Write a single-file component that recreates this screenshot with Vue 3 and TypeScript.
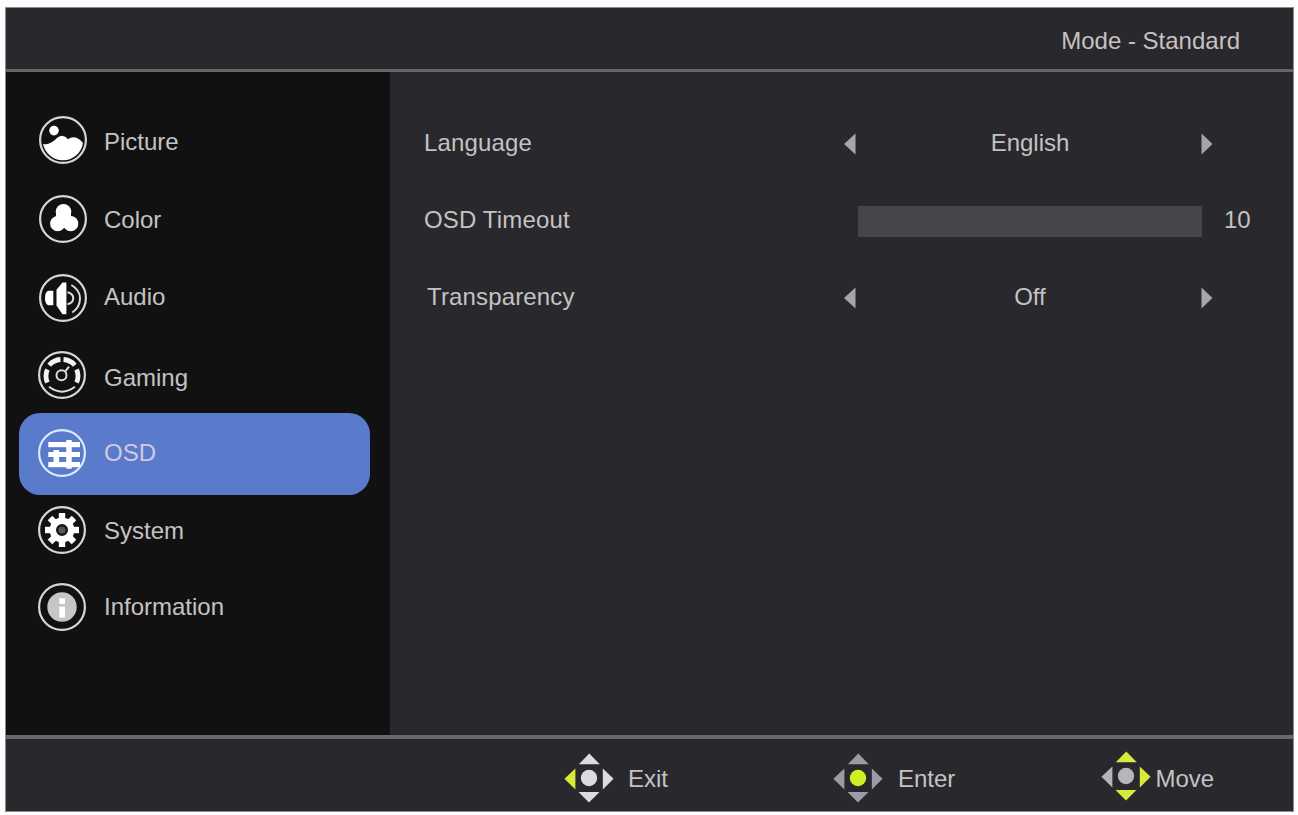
<script setup lang="ts">
type Icon = 'picture' | 'color' | 'audio' | 'gaming' | 'osd' | 'system' | 'information'

interface MenuItem {
  icon: Icon
  label: string
}

interface Hint {
  id: 'exit' | 'enter' | 'move'
  label: string
}

const menu: MenuItem[] = [
  { icon: 'picture', label: 'Picture' },
  { icon: 'color', label: 'Color' },
  { icon: 'audio', label: 'Audio' },
  { icon: 'gaming', label: 'Gaming' },
  { icon: 'osd', label: 'OSD' },
  { icon: 'system', label: 'System' },
  { icon: 'information', label: 'Information' },
]
const active: Icon = 'osd'

const hints: Hint[] = [
  { id: 'exit', label: 'Exit' },
  { id: 'enter', label: 'Enter' },
  { id: 'move', label: 'Move' },
]

const teeth: number[] = [0, 45, 90, 135, 180, 225, 270, 315]
</script>

<template>
  <div class="screen">
    <div class="panel">
      <header class="top">
        <span class="mode">Mode - Standard</span>
      </header>

      <div class="body">
        <nav class="menu">
          <div
            v-for="item in menu"
            :key="item.icon"
            class="item"
            :class="[item.icon, { active: item.icon === active }]"
          >
            <svg class="icon" viewBox="0 0 50 50" width="50" height="50">
              <circle class="ring" cx="25" cy="25" r="22.900" />
              <g v-if="item.icon === 'picture'" class="solid">
                <circle cx="16" cy="15.600" r="4.800" />
                <path d="M5 28.800 Q8 30 11 28.600 Q14 27 17 25 Q19.500 21.500 24 20.800 Q27.500 21 30 24.200 Q34 21 38.500 22.800 Q42 24 45 28 A20.300 20.300 0 0 1 5 28.800 Z" />
              </g>
              <g v-else-if="item.icon === 'color'" class="solid">
                <circle cx="25.500" cy="17.800" r="7.800" />
                <circle cx="19.700" cy="29.700" r="7.600" />
                <circle cx="32.700" cy="29.700" r="7.600" />
                <path d="M18 20 L33 20 L33 34 L18 34 Z" />
              </g>
              <g v-else-if="item.icon === 'audio'">
                <path class="solid" d="M15.300 17.700 H10.500 Q7 18.500 7 25 Q7 31.500 10.500 32.300 H15.300 Z" />
                <path class="solid" d="M18.500 16.700 L24.500 9.500 H28.400 V41.300 H24.500 L18.500 32.400 Z" />
                <path class="line" d="M29.500 19.300 Q35.200 20.500 35.200 25.300 Q35.200 30 29.500 31.300" />
                <path class="line" d="M33.300 12 Q42 17 42 25.300 Q42 34.500 34.300 39.500" />
              </g>
              <g v-else-if="item.icon === 'gaming'">
                <circle class="line" cx="24.500" cy="25.300" r="5" />
                <path class="line" d="M28.300 21.300 L32 16.700" />
                <path class="segment" d="M12.200 15.200 A16 16 0 0 1 23.500 9.500" />
                <path class="segment" d="M26.500 9.500 A16 16 0 0 1 37.800 15.200" />
                <path class="segment" d="M10.400 19.500 A16 16 0 0 0 10.400 32.500" />
                <path class="segment" d="M39.600 19.500 A16 16 0 0 1 39.600 32.500" />
                <path class="line" d="M12 36.800 Q25 46.500 38 36.800" />
              </g>
              <g v-else-if="item.icon === 'osd'" class="solid">
                <rect x="11.300" y="14" width="31.700" height="5.200" />
                <rect x="11.300" y="24" width="31.700" height="5" />
                <rect x="11.300" y="34" width="31.700" height="5.200" />
                <rect x="29.200" y="12" width="5.500" height="28.700" />
                <rect x="16.500" y="22" width="5.600" height="14" />
              </g>
              <g v-else-if="item.icon === 'system'" class="solid">
                <circle cx="25" cy="25" r="12.400" />
                <rect
                  v-for="angle in teeth"
                  :key="angle"
                  x="21.800"
                  y="8"
                  width="6.400"
                  height="8"
                  :transform="`rotate(${angle} 25 25)`"
                />
                <circle class="hole" cx="25" cy="25" r="4.800" />
              </g>
              <g v-else>
                <circle class="disc" cx="25" cy="25" r="14.700" />
                <rect class="solid" x="22.300" y="16.300" width="5.700" height="5.700" />
                <rect class="solid" x="22.300" y="24.700" width="5.700" height="11" />
              </g>
            </svg>
            <span class="label">{{ item.label }}</span>
          </div>
        </nav>

        <main class="settings">
          <div class="setting">
            <span class="name">Language</span>
            <div class="picker">
              <svg class="arrow" viewBox="0 0 12 22" width="12" height="22"><path d="M0 11 L11.500 .5 V21.500 Z" /></svg>
              <span class="value">English</span>
              <svg class="arrow" viewBox="0 0 12 22" width="12" height="22"><path d="M11.500 11 L.5 .5 V21.500 Z" /></svg>
            </div>
          </div>
          <div class="setting">
            <span class="name">OSD Timeout</span>
            <div class="slider">
              <div class="track"></div>
              <span class="amount">10</span>
            </div>
          </div>
          <div class="setting">
            <span class="name indent">Transparency</span>
            <div class="picker">
              <svg class="arrow" viewBox="0 0 12 22" width="12" height="22"><path d="M0 11 L11.500 .5 V21.500 Z" /></svg>
              <span class="value">Off</span>
              <svg class="arrow" viewBox="0 0 12 22" width="12" height="22"><path d="M11.500 11 L.5 .5 V21.500 Z" /></svg>
            </div>
          </div>
        </main>
      </div>

      <footer class="bottom">
        <div v-for="hint in hints" :key="hint.id" class="hint" :class="hint.id">
          <svg class="pad" viewBox="0 0 50 50" width="50" height="50">
            <path class="up" d="M25.300 .5 L35.800 11.300 H14.800 Z" />
            <path class="down" d="M25 49.500 L35.500 39 H14.500 Z" />
            <path class="left" d="M.4 25.800 L11.400 15.500 V36.500 Z" />
            <path class="right" d="M49.600 25.800 L38.800 15.500 V36.500 Z" />
            <circle class="ok" cx="25" cy="25" r="8.200" />
          </svg>
          <span class="caption">{{ hint.label }}</span>
        </div>
      </footer>
    </div>
  </div>
</template>

<style>
body {
  margin: 0;
  background: #fdfdfd;
}
</style>

<style scoped>
.screen {
  box-sizing: border-box;
  width: 1298px;
  height: 815px;
  padding: 7px 4px 3px 5px;
  background: #fdfdfd;
  overflow: hidden;
  font-family: 'Liberation Sans', Arial, sans-serif;
  font-size: 24px;
  line-height: 28px;
  color: #c5c2c4;
  white-space: nowrap;
}
.panel {
  box-sizing: border-box;
  display: flex;
  flex-direction: column;
  height: 805px;
  border: 1px solid #8c8c8e;
  background: #29282c;
}
.top {
  box-sizing: border-box;
  display: flex;
  justify-content: flex-end;
  height: 64px;
  padding: 19px 53px 0 0;
  border-bottom: 3px solid #656468;
}
.body {
  display: flex;
  height: 663px;
}
.menu {
  box-sizing: border-box;
  display: grid;
  grid-template-rows: 78px 79px 79px 76px 82px 74px 77px;
  align-content: start;
  width: 384px;
  padding: 29px 20px 0 12.500px;
  background: #111112;
}
.item {
  display: flex;
  align-items: flex-start;
  padding-left: 19px;
}
.icon {
  flex: none;
  margin-right: 16.500px;
}
.ring {
  fill: none;
  stroke: #d6d6d6;
  stroke-width: 2.200;
}
.solid {
  fill: #fff;
}
.line {
  fill: none;
  stroke: #dcdcdc;
  stroke-width: 2;
}
.segment {
  fill: none;
  stroke: #f4f4f4;
  stroke-width: 4.800;
}
.disc {
  fill: #c6c6c6;
}
.hole {
  fill: #555;
  stroke: #161616;
  stroke-width: 2.400;
}
.picture .icon { margin-top: 13.500px; }
.picture .label { margin-top: 27px; }
.color .icon { margin-top: 15px; }
.color .label { margin-top: 27px; }
.audio .icon { margin-top: 15px; }
.audio .label { margin-top: 25px; }
.gaming .icon { margin-top: 13px; }
.gaming .label { margin-top: 27px; }
.osd .icon { margin-top: 14.500px; }
.osd .label { margin-top: 26px; }
.system .icon { margin-top: 9.500px; }
.system .label { margin-top: 22px; }
.information .icon { margin-top: 13px; }
.information .label { margin-top: 24px; }
.gaming .icon,
.osd .icon,
.system .icon,
.information .icon {
  margin-left: -0.5px;
  margin-right: 17px;
}
.item.active {
  border-radius: 21px;
  background: #5a7acb;
  color: #d3c8df;
}
.active .ring {
  stroke: #d9ecff;
}
.settings {
  flex: 1;
  padding: 34px 0 0 34px;
}
.setting {
  display: flex;
  align-items: center;
  height: 77px;
}
.name {
  width: 420px;
  margin-top: -3px;
  letter-spacing: 0.15px;
}
.name.indent {
  box-sizing: border-box;
  padding-left: 3px;
}
.picker {
  display: flex;
  align-items: center;
  justify-content: space-between;
  width: 369px;
}
.arrow {
  margin-top: -1px;
  fill: #a7a5ab;
}
.value {
  margin: -3px 0 0 3px;
}
.slider {
  display: flex;
  align-items: center;
  padding-left: 13.500px;
}
.track {
  width: 344px;
  height: 31px;
  margin-top: -1px;
  background: #45464b;
}
.amount {
  margin: -3px 0 0 22.500px;
}
.bottom {
  box-sizing: border-box;
  display: flex;
  height: 76px;
  border-top: 4px solid #69676c;
  padding-left: 558px;
}
.hint {
  display: flex;
  align-items: flex-start;
}
.hint path,
.hint circle {
  fill: #dddbdf;
}
.pad {
  margin-top: 13.500px;
}
.caption {
  margin-top: 26px;
}
.exit { width: 269px; }
.enter { width: 268px; }
.exit .caption { margin-left: 14px; }
.enter .caption { margin-left: 15px; }
.enter path {
  fill: #9e9aa5;
}
.move path,
.move circle {
  fill: #b8b4bc;
}
.move .pad { margin-top: 12px; }
.move .caption { margin-left: 4.500px; }
.exit .left,
.move .up,
.move .down,
.move .right {
  fill: #d7ea3c;
}
.enter .ok {
  fill: #cdf022;
}
</style>
